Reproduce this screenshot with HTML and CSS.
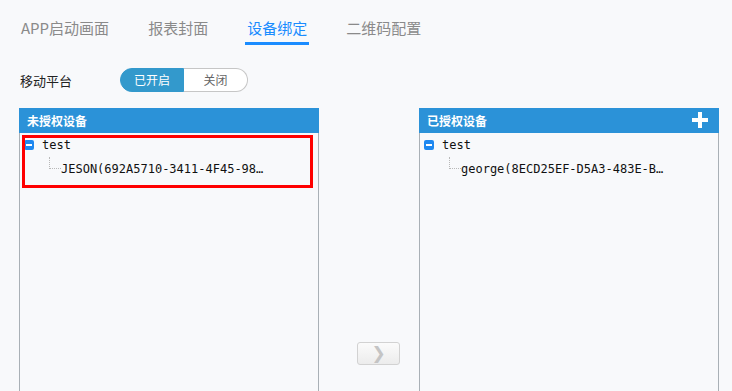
FILE: index.html
```html
<!DOCTYPE html>
<html lang="zh-CN">
<head>
    <meta charset="UTF-8">
    <meta name="viewport" content="width=device-width, initial-scale=1.0">
    <title>设备绑定</title>
    <link rel="stylesheet" href="styles.css">
</head>
<body>
    <div class="tabs">
        <a href="#" class="tab">APP启动画面</a>
        <a href="#" class="tab">报表封面</a>
        <a href="#" class="tab active">设备绑定</a>
        <a href="#" class="tab">二维码配置</a>
    </div>

    <div class="platform">
        <span class="label">移动平台</span>
        <div class="switch">
            <span class="switch-on">已开启</span>
            <span class="switch-off">关闭</span>
        </div>
    </div>

    <div class="binding">
        <div class="panel">
            <div class="panel-head">未授权设备</div>
            <div class="panel-body">
                <div class="tree">
                    <div class="node">
                        <span class="toggle"></span>
                        <span class="name">test</span>
                    </div>
                    <div class="node leaf">
                        <span class="line"></span>
                        <span class="name">JESON(692A5710-3411-4F45-98…</span>
                    </div>
                </div>
                <div class="mark"></div>
            </div>
        </div>

        <div class="middle">
            <button class="move" type="button">❯</button>
        </div>

        <div class="panel">
            <div class="panel-head">
                已授权设备
                <span class="add"></span>
            </div>
            <div class="panel-body">
                <div class="tree">
                    <div class="node">
                        <span class="toggle"></span>
                        <span class="name">test</span>
                    </div>
                    <div class="node leaf">
                        <span class="line"></span>
                        <span class="name">george(8ECD25EF-D5A3-483E-B…</span>
                    </div>
                </div>
            </div>
        </div>
    </div>
</body>
</html>
```

FILE: styles.css
```css
body {
    margin: 0;
    padding: 18px 0 0 19px;
    background: #f8f9fb;
    font-family: "Noto Sans CJK SC", "Noto Sans", sans-serif;
    color: #333;
    overflow: hidden;
}
.tabs {
    display: flex;
    gap: 35px;
}
.tab {
    padding: 0 2px 4px;
    font-size: 15px;
    line-height: 20px;
    color: #8a8a8a;
    text-decoration: none;
    border-bottom: 3px solid transparent;
}
.tab.active {
    color: #1a8cff;
    border-bottom-color: #1a8cff;
}
.platform {
    display: flex;
    align-items: center;
    margin-top: 23px;
    height: 24px;
}
.label {
    width: 100px;
    padding-left: 1px;
    font-size: 13px;
    color: #222;
}
.switch {
    display: flex;
    height: 24px;
    font-size: 12px;
    line-height: 22px;
}
.switch-on {
    width: 64px;
    text-align: center;
    color: white;
    background: #3399cc;
    border: 1px solid #3399cc;
    border-radius: 12px 0 0 12px;
    box-sizing: border-box;
}
.switch-off {
    width: 64px;
    text-align: center;
    color: #666;
    background: white;
    border: 1px solid #c6c6c6;
    border-left: none;
    border-radius: 0 12px 12px 0;
    box-sizing: border-box;
}
.binding {
    display: flex;
    margin-top: 16px;
}
.panel {
    width: 300px;
    height: 490px;
    display: flex;
    flex-direction: column;
}
.panel-head {
    position: relative;
    height: 25px;
    line-height: 25px;
    padding-left: 8px;
    background: #2b92d8;
    color: white;
    font-size: 12px;
    font-weight: bold;
}
.add {
    position: absolute;
    right: 11px;
    top: 4px;
    width: 16px;
    height: 16px;
}
.add::before,
.add::after {
    content: "";
    position: absolute;
    background: white;
}
.add::before {
    left: 0;
    top: 6px;
    width: 16px;
    height: 4px;
}
.add::after {
    left: 6px;
    top: 0;
    width: 4px;
    height: 16px;
}
.panel-body {
    position: relative;
    flex: 1;
    border-left: 1px solid #a9b0b6;
    border-right: 1px solid #a9b0b6;
}
.tree {
    padding-left: 4px;
    font-family: "DejaVu Sans Mono", "Liberation Mono", monospace;
    font-size: 12px;
    color: #111;
}
.node {
    display: flex;
    align-items: center;
    height: 24px;
}
.toggle {
    position: relative;
    width: 10px;
    height: 10px;
    margin-right: 8px;
    background: #1e88f0;
    border-radius: 2px;
}
.toggle::after {
    content: "";
    position: absolute;
    left: 2px;
    top: 4px;
    width: 6px;
    height: 2px;
    background: white;
}
.leaf {
    align-items: flex-start;
}
.line {
    width: 12px;
    height: 12px;
    margin-left: 25px;
    border-left: 1px dotted #b8b8b8;
    border-bottom: 1px dotted #b8b8b8;
    box-sizing: border-box;
}
.leaf .name {
    margin-top: 4px;
    line-height: 16px;
}
.mark {
    position: absolute;
    left: 2px;
    top: 2px;
    width: 291px;
    height: 53px;
    border: 3px solid #f00;
    box-sizing: border-box;
}
.middle {
    width: 100px;
}
.move {
    display: block;
    margin: 234px 0 0 38px;
    width: 43px;
    height: 23px;
    padding: 0;
    border: 1px solid #d2d2d2;
    border-radius: 3px;
    background: linear-gradient(#fbfbfb, #ececec);
    color: #c4c4c4;
    font-size: 17px;
    line-height: 21px;
    font-weight: bold;
    font-family: "DejaVu Sans", sans-serif;
}
```
